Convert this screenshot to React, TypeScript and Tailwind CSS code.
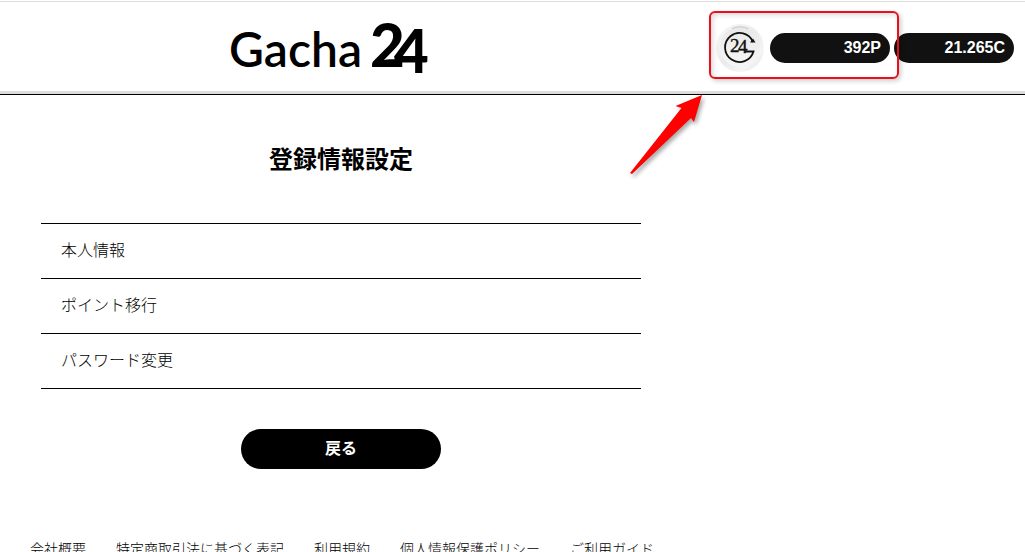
import React from 'react';

const menuItems = ['本人情報', 'ポイント移行', 'パスワード変更'];

const footerLinks = [
  '会社概要',
  '特定商取引法に基づく表記',
  '利用規約',
  '個人情報保護ポリシー',
  'ご利用ガイド',
];

const Logo = () => {
  return (
    <svg className="overflow-visible" width="200" height="70" viewBox="0 0 200 70" role="img" aria-label="Gacha24" fill="#000">
      <text x="-1" y="54" fontFamily="Lato, sans-serif" fontSize="48" fontWeight="600">Gacha</text>
      <text x="140" y="54" fontFamily="Lato, sans-serif" fontSize="60" fontWeight="900">2</text>
      <text x="164" y="60" fontFamily="Lato, sans-serif" fontSize="60" fontWeight="900">4</text>
    </svg>
  );
};

const Coin = () => {
  return (
    <svg width="50" height="50" viewBox="0 0 50 50" aria-hidden="true">
      <defs>
        <linearGradient id="rim" x1="0" y1="0" x2="1" y2="1">
          <stop offset="0" stopColor="#f8f8f8" />
          <stop offset="0.5" stopColor="#ebebeb" />
          <stop offset="0.75" stopColor="#f5f5f5" />
          <stop offset="1" stopColor="#e2e2e2" />
        </linearGradient>
        <linearGradient id="face" x1="0" y1="0" x2="0" y2="1">
          <stop offset="0" stopColor="#e8e8e8" />
          <stop offset="1" stopColor="#f6f6f6" />
        </linearGradient>
      </defs>
      <circle cx="24" cy="25" r="24" fill="url(#rim)" />
      <circle cx="24" cy="24" r="20" fill="url(#face)" />
      <path d="M16 5.5A20 20 0 0 1 32 5.5" fill="none" stroke="#bbb" strokeWidth="0.8" />
      <path d="M37 19A14.5 14.5 0 1 0 37.5 28.5H29" fill="none" stroke="#111" strokeWidth="1.8" />
      <path d="M34 19.5H39.500L37 15.500Z" fill="#111" />
      <text x="14" y="29" fontFamily="'Liberation Serif', serif" fontSize="19" fontWeight="400" fill="#111" stroke="#111" strokeWidth="0.4">2</text>
      <text x="22" y="30" fontFamily="'Liberation Serif', serif" fontSize="19" fontWeight="400" fill="#111" stroke="#111" strokeWidth="0.4">4</text>
    </svg>
  );
};

const Balance = ({ value }: { value: string }) => {
  return (
    <div className="flex h-[30px] w-[120px] items-center justify-end rounded-full bg-[#111] pr-[9px] font-['Liberation_Sans',Arial,sans-serif] text-base font-bold text-white">
      {value}
    </div>
  );
};

const App = () => {
  return (
    <div className="relative bg-white font-['Noto_Sans_CJK_JP',sans-serif] text-black">
      <header className="mt-px flex h-[94px] items-center justify-between border-t border-b border-t-[#ddd] border-b-black pr-[11px] pl-[230px] shadow-[inset_0_-3px_0_#ddd]">
        <Logo />
        <div className="flex items-center gap-1">
          <Coin />
          <Balance value="392P" />
          <Balance value="21.265C" />
        </div>
      </header>

      <main className="max-w-[682px] px-[41px] pt-[45px]">
        <h1 className="text-center text-2xl leading-9 font-bold">登録情報設定</h1>
        <ul className="mt-[47px] border-t border-black">
          {menuItems.map((item) => (
            <li key={item} className="border-b border-black">
              <a href="#" className="block px-5 pt-[13px] pb-[17px] text-base font-light">{item}</a>
            </li>
          ))}
        </ul>
        <button type="button" className="mx-auto mt-10 block h-10 w-[200px] rounded-full bg-black pb-1 text-base font-bold text-white">
          戻る
        </button>
      </main>

      <footer className="mt-[69px] flex gap-[30px] px-[30px] text-sm font-light">
        {footerLinks.map((link) => (
          <a key={link} href="#" className="whitespace-nowrap">{link}</a>
        ))}
      </footer>

      {/* callout */}
      <div className="pointer-events-none absolute top-[10px] right-[126px] h-[68px] w-[190px] rounded-md border-2 border-[#e8101a] shadow-[2px_2px_5px_rgba(0,0,0,0.2),inset_2px_2px_5px_rgba(0,0,0,0.15)]" />
      <svg className="pointer-events-none absolute top-[89px] right-[313px] drop-shadow-[2px_3px_2px_rgba(0,0,0,0.35)]" width="84" height="88" viewBox="0 0 84 88" aria-hidden="true">
        <path d="M74 5L47.5 16L53.5 18L2 83L4 84L63 28L66 32Z" fill="#fe0000" />
      </svg>
    </div>
  );
};

export default App;
